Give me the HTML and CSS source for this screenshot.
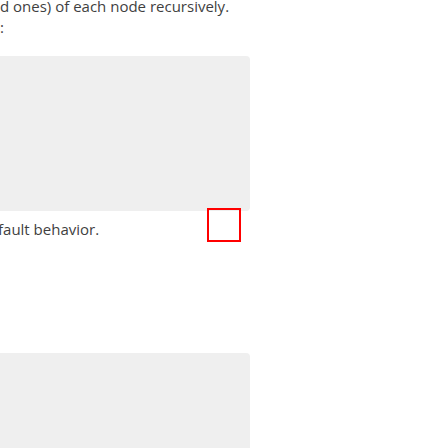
FILE: index.html
```html
<!DOCTYPE html>
<html lang="en">
<head>
<meta charset="utf-8">
<title>Docs fragment</title>
<link rel="stylesheet" href="styles.css">
</head>
<body>
<main class="doc">
  <p class="text">d ones) of each node recursively.</p>
  <p class="text">:</p>
  <div class="code-block first"></div>
  <p class="text clipped">fault behavior.</p>
  <div class="code-block second"></div>
  <div class="highlight" aria-hidden="true"></div>
</main>
</body>
</html>
```
FILE: styles.css
```css
html, body {
  margin: 0;
  padding: 0;
  background: #ffffff;
}
body {
  width: 448px;
  height: 448px;
  overflow: hidden;
}
.doc {
  position: relative;
  width: 250px;
  margin-top: -4px;
  font-family: "Open Sans", "Noto Sans", sans-serif;
  font-size: 15px;
  line-height: 21px;
  color: #3f3f3f;
}
.text {
  margin: 0;
  white-space: nowrap;
}
.clipped {
  text-indent: -2px;
  margin-top: 8px;
}
.code-block {
  background: #efefef;
  border-radius: 0 4px 4px 0;
}
.first {
  margin-top: 18px;
  height: 155px;
}
.second {
  margin-top: 113px;
  height: 95px;
  border-radius: 0 4px 0 0;
}
.highlight {
  position: absolute;
  left: 207px;
  top: 212px;
  width: 30px;
  height: 30px;
  border: 2px solid #ff0000;
}
```
